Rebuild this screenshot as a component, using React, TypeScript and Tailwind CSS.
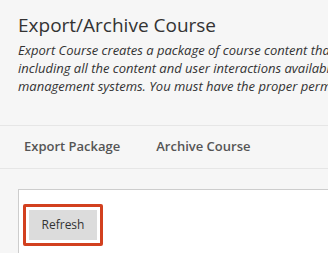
export default function App() {
  return (
    <div
      className="h-[253px] w-[328px] overflow-hidden bg-[#f6f6f6] text-[#333]"
      style={{ fontFamily: '"Open Sans", "Noto Sans", sans-serif' }}>
      <div className="pl-[18px] pt-[11px] pb-[30px]">
        <h1 className="whitespace-nowrap text-[19px] leading-[28px] text-[#333]">
          Export/Archive Course
        </h1>
        <p className="mt-[2px] w-[360px] whitespace-nowrap text-[13px] italic leading-[18px] text-[#333]">
          Export Course creates a package of course content that
          <br />
          including all the content and user interactions available
          <br />
          management systems. You must have the proper permissions
        </p>
      </div>
      <nav className="flex h-[44px] items-center gap-[36px] border-y border-[#e6e6e6] pl-[24px] text-[13px] font-semibold text-[#555]">
        <span>Export Package</span>
        <span>Archive Course</span>
      </nav>
      <div className="pl-[18px] pt-[20px]">
        <div className="h-[80px] border-l border-t border-[#cdcdcd] bg-white pl-[4px] pt-[14px]">
          <div className="inline-flex rounded-[2px] border-[3px] border-[#d2401f] p-[3px]">
            <button className="h-[30px] w-[68px] bg-[#dcdcdc] text-[12px] text-[#333]">
              Refresh
            </button>
          </div>
        </div>
      </div>
    </div>
  )
}
